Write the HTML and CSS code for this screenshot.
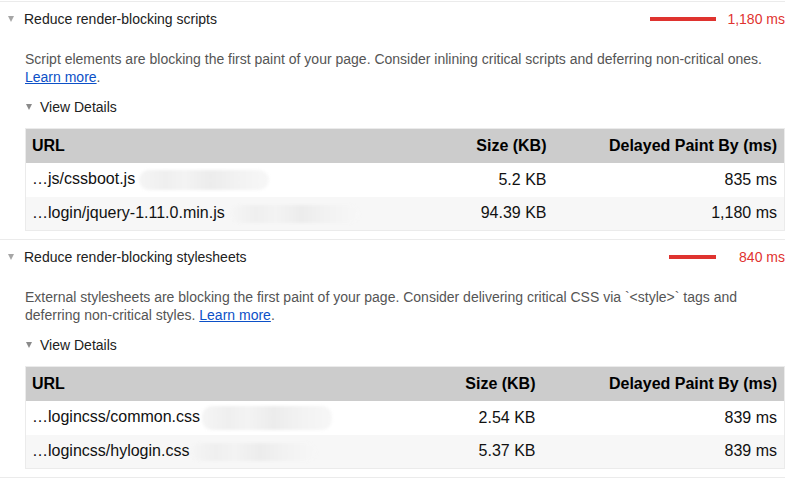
FILE: index.html
```html
<!DOCTYPE html>
<html>
<head>
<meta charset="utf-8">
<link rel="stylesheet" href="styles.css">
</head>
<body>
<div class="report">
  <section class="audit">
    <div class="audit-head">
      <span class="arrow"></span>
      <span class="audit-title">Reduce render-blocking scripts</span>
      <span class="bar" style="width:66px"></span>
      <span class="display">1,180 ms</span>
    </div>
    <p class="desc">Script elements are blocking the first paint of your page. Consider inlining critical scripts and deferring non-critical ones. <a href="#">Learn more</a>.</p>
    <div class="details"><span class="arrow small"></span>View Details</div>
    <table class="tbl">
      <colgroup><col class="c-url"><col class="c-size1"><col class="c-delay1"></colgroup>
      <thead><tr><th class="l">URL</th><th>Size (KB)</th><th>Delayed Paint By (ms)</th></tr></thead>
      <tbody>
        <tr><td class="l">…js/cssboot.js<span class="blob b1"></span></td><td>5.2 KB</td><td>835 ms</td></tr>
        <tr class="alt"><td class="l">…login/jquery-1.11.0.min.js<span class="blob b2"></span></td><td>94.39 KB</td><td>1,180 ms</td></tr>
      </tbody>
    </table>
  </section>
  <section class="audit">
    <div class="audit-head">
      <span class="arrow"></span>
      <span class="audit-title">Reduce render-blocking stylesheets</span>
      <span class="bar" style="width:47px"></span>
      <span class="display">840 ms</span>
    </div>
    <p class="desc">External stylesheets are blocking the first paint of your page. Consider delivering critical CSS via `&lt;style&gt;` tags and deferring non-critical styles. <a href="#">Learn more</a>.</p>
    <div class="details"><span class="arrow small"></span>View Details</div>
    <table class="tbl">
      <colgroup><col class="c-url"><col class="c-size2"><col class="c-delay2"></colgroup>
      <thead><tr><th class="l">URL</th><th>Size (KB)</th><th>Delayed Paint By (ms)</th></tr></thead>
      <tbody>
        <tr><td class="l">…logincss/common.css<span class="blob b3"></span></td><td>2.54 KB</td><td>839 ms</td></tr>
        <tr class="alt"><td class="l">…logincss/hylogin.css<span class="blob b4"></span></td><td>5.37 KB</td><td>839 ms</td></tr>
      </tbody>
    </table>
  </section>
  <div class="end"></div>
</div>
</body>
</html>
```

FILE: styles.css
```css
html, body {
  margin: 0;
  padding: 0;
  background: #fff;
}
body {
  font-family: "Liberation Sans", Arial, sans-serif;
  font-size: 14px;
  color: #212121;
}
.report {
  width: 785px;
  padding-top: 1px;
}
.audit {
  border-top: 1px solid #ebebeb;
  padding-bottom: 8px;
}
.end {
  border-top: 1px solid #ebebeb;
}
.audit-head {
  display: flex;
  align-items: center;
  padding-top: 9px;
  line-height: 16px;
  height: 16px;
}
.arrow {
  width: 0;
  height: 0;
  border-left: 3.5px solid transparent;
  border-right: 3.5px solid transparent;
  border-top: 6px solid #a6a6a6;
  margin-left: 8px;
  margin-right: 10px;
}
.arrow.small {
  margin-left: 1px;
  margin-right: 8px;
  border-top-color: #8a8a8a;
}
.audit-title {
  flex: 1;
  color: #212121;
}
.bar {
  height: 4px;
  background: #df332f;
}
.display {
  width: 58px;
  margin-left: 11px;
  text-align: right;
  color: #df332f;
}
.desc {
  margin: 23px 0 0 25px;
  line-height: 18px;
  color: #555555;
  width: 760px;
}
.desc a {
  color: #0c50c7;
  text-decoration: underline;
}
.details {
  display: flex;
  align-items: center;
  margin: 13px 0 0 25px;
  line-height: 16px;
  color: #212121;
}
.tbl {
  margin: 13px 0 0 25px;
  width: 760px;
  border-collapse: collapse;
  table-layout: fixed;
  border: 1px solid #ebebeb;
  font-size: 16px;
}
.c-size1 { width: 120px; }
.c-delay1 { width: 231px; }
.c-size2 { width: 120px; }
.c-delay2 { width: 242px; }
.tbl th, .tbl td {
  height: 34px;
  padding: 0 7px 0 6px;
  text-align: right;
  line-height: 18px;
  box-sizing: border-box;
  white-space: nowrap;
}
.tbl th {
  background: #cccccc;
  font-weight: bold;
  color: #000;
}
.tbl td {
  color: #111;
}
.tbl .l {
  text-align: left;
}
.tbl tr.alt td {
  background: #f7f7f7;
}
.blob {
  display: inline-block;
  vertical-align: middle;
  border-radius: 10px;
  filter: blur(1.5px);
  background: linear-gradient(90deg, #f5f5f5 0%, #efefef 20%, #f3f3f3 35%, #ececec 55%, #f2f2f2 75%, #f7f7f7 100%);
}
.b1 { width: 130px; height: 20px; margin-left: 4px; }
.b2 { width: 128px; height: 18px; margin-left: 6px; }
.b3 { width: 130px; height: 24px; margin-left: 2px; }
.b4 { width: 125px; height: 18px; margin-left: 2px; }
```
